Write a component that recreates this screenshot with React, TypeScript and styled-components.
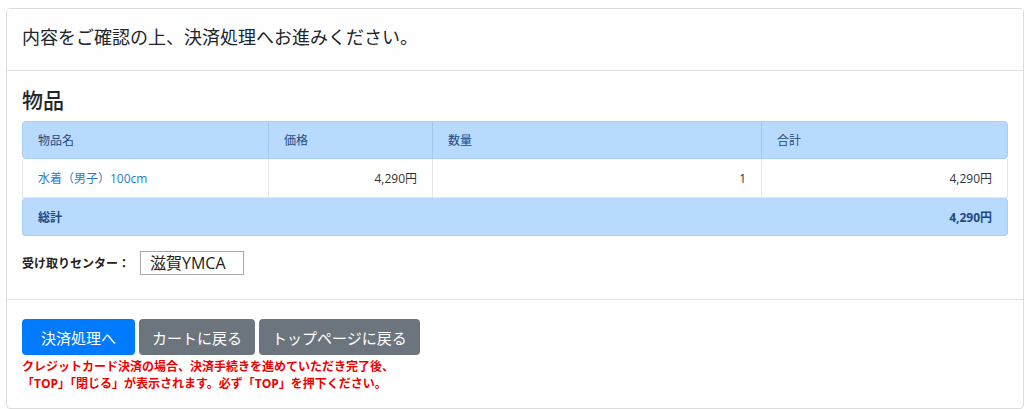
import React from 'react'
import styled, { createGlobalStyle } from 'styled-components'

const GlobalStyle = createGlobalStyle`
  html, body {
    margin: 0;
    padding: 0;
    background: #ffffff;
  }
  body {
    font-family: "Open Sans", "Noto Sans CJK JP", sans-serif;
    color: #212529;
  }
`

const Page = styled.div`
  padding: 8px 0 0 6px;
`

const Card = styled.div`
  border: 1px solid #dcdcdc;
  border-radius: 4px;
  background: #fff;
`

const CardHeader = styled.div`
  padding: 15px 15px 19px;
  font-size: 18px;
  line-height: 27px;
  background: #fefefe;
  border-bottom: 1px solid #e2e2e2;
`

const CardBody = styled.div`
  padding: 17px 15px 24px;
  border-bottom: 1px solid #e2e2e2;
`

const CardFooter = styled.div`
  padding: 19px 15px 16px;
`

const Heading = styled.h2`
  margin: 0 0 8px;
  font-size: 21px;
  font-weight: 500;
  line-height: 25px;
`

const Table = styled.div`
  display: flex;
  flex-direction: column;
`

const Row = styled.div<{ $kind: 'head' | 'data' | 'total' }>`
  display: grid;
  grid-template-columns: 246px 164px 329px 1fr;
  height: ${p => (p.$kind === 'data' ? 39 : 38)}px;
  background: ${p => (p.$kind === 'data' ? '#fff' : '#b8daff')};
  border: 1px solid ${p => (p.$kind === 'data' ? '#e6e6e6' : '#a9cdf5')};
  border-top: none;
  border-radius: ${p => (p.$kind === 'data' ? '0' : '4px')};
  box-sizing: border-box;
  font-size: 12px;
  color: ${p => (p.$kind === 'data' ? '#333' : '#1d4a80')};
  font-weight: ${p => (p.$kind === 'total' ? 700 : 400)};
  &:first-child {
    border-top: 1px solid #a9cdf5;
  }
`

const Cell = styled.div<{ $right?: boolean; $span?: number; $line?: string }>`
  display: flex;
  align-items: center;
  justify-content: ${p => (p.$right ? 'flex-end' : 'flex-start')};
  padding: 0 15px;
  grid-column: span ${p => p.$span || 1};
  border-right: ${p => (p.$line ? `1px solid ${p.$line}` : 'none')};
`

const ItemLink = styled.a`
  color: #1f7ad6;
  text-decoration: none;
`

const PickupRow = styled.div`
  display: flex;
  align-items: center;
  margin-top: 15px;
  gap: 10px;
`

const PickupLabel = styled.span`
  font-size: 12px;
  font-weight: 700;
  color: #222;
`

const PickupBox = styled.div`
  width: 104px;
  height: 24px;
  box-sizing: border-box;
  border: 1px solid #a8a8a8;
  padding: 0 9px;
  font-size: 16px;
  line-height: 22px;
  color: #222;
`

const Buttons = styled.div`
  display: flex;
  gap: 4px;
`

const Button = styled.button<{ $variant: 'primary' | 'secondary' }>`
  height: 36px;
  padding: 0 ${p => (p.$variant === 'primary' ? 19 : 13)}px;
  border: none;
  border-radius: 4px;
  font-family: "Open Sans", "Noto Sans CJK JP", sans-serif;
  font-size: 15px;
  color: #fff;
  background: ${p => (p.$variant === 'primary' ? '#007bff' : '#6c757d')};
`

const Notice = styled.p`
  margin: 3px 0 0;
  font-size: 12px;
  font-weight: 700;
  line-height: 17px;
  color: #f00000;
`

const headLine = 'rgba(120, 160, 210, 0.35)'
const dataLine = '#e6e6e6'

export default function App() {
  return (
    <>
      <GlobalStyle />
      <Page>
        <Card>
          <CardHeader>内容をご確認の上、決済処理へお進みください。</CardHeader>
          <CardBody>
            <Heading>物品</Heading>
            <Table>
              <Row $kind="head">
                <Cell $line={headLine}>物品名</Cell>
                <Cell $line={headLine}>価格</Cell>
                <Cell $line={headLine}>数量</Cell>
                <Cell>合計</Cell>
              </Row>
              <Row $kind="data">
                <Cell $line={dataLine}>
                  <ItemLink href="#">水着（男子）100cm</ItemLink>
                </Cell>
                <Cell $line={dataLine} $right>4,290円</Cell>
                <Cell $line={dataLine} $right>1</Cell>
                <Cell $right>4,290円</Cell>
              </Row>
              <Row $kind="total">
                <Cell $span={3}>総計</Cell>
                <Cell $right>4,290円</Cell>
              </Row>
            </Table>
            <PickupRow>
              <PickupLabel>受け取りセンター：</PickupLabel>
              <PickupBox>滋賀YMCA</PickupBox>
            </PickupRow>
          </CardBody>
          <CardFooter>
            <Buttons>
              <Button $variant="primary">決済処理へ</Button>
              <Button $variant="secondary">カートに戻る</Button>
              <Button $variant="secondary">トップページに戻る</Button>
            </Buttons>
            <Notice>
              クレジットカード決済の場合、決済手続きを進めていただき完了後、
              <br />
              「TOP」「閉じる」が表示されます。必ず「TOP」を押下ください。
            </Notice>
          </CardFooter>
        </Card>
      </Page>
    </>
  )
}
